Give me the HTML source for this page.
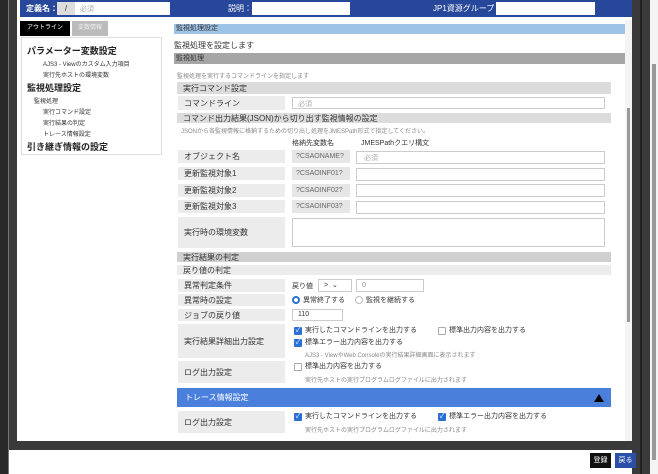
<!DOCTYPE html><html><head><meta charset="utf-8"><style>
*{margin:0;padding:0;box-sizing:border-box}
body{width:658px;height:474px;position:relative;overflow:hidden;background:#3a3a3a;font-family:"Liberation Sans","Noto Sans CJK JP",sans-serif;font-size:8px;color:#333}
div,span{position:absolute}
.t{white-space:nowrap}
.lbl{background:#ececec;left:178px;width:107px;padding-left:6px;display:flex;align-items:center;font-size:8px;color:#333}
.inp{background:#fff;border:1px solid #ccc}
.bar{background:#dcdcdc;left:177px;width:434px;padding-left:6px;font-size:8px;display:flex;align-items:center}
.ro{background:#e6e6e6;left:292px;width:58px;height:13px;font-size:7px;color:#666;padding-left:4px;display:flex;align-items:center}
.q{left:356px;width:249px;height:13px}
.cb{width:8px;height:8px;background:#2a6fd6;border-radius:1px;color:#fff;font-size:7px;line-height:8px;text-align:center}
.cbo{width:8px;height:8px;border:1px solid #aaa;background:#fff;border-radius:1px}
.s{font-size:6px;color:#888}
</style></head><body>
<div style="left:0;top:0;width:8px;height:474px;background:#282828"></div>
<div style="left:8px;top:0;width:1px;height:474px;background:#777"></div>
<div style="left:17px;top:0;width:615px;height:441px;background:#fff"></div>
<div style="left:20px;top:0;width:612px;height:17px;background:#27479a"></div>
<div class="t" style="left:26px;top:3px;color:#fff;font-size:8px;font-weight:bold">定義名：</div>
<div class="inp" style="left:57px;top:2px;width:113px;height:13px;border:none"></div>
<div style="left:57px;top:2px;width:18px;height:13px;background:#ddd;font-size:8px;text-align:center;line-height:13px">/</div>
<div class="t" style="left:80px;top:4px;color:#aaa;font-size:7px">必須</div>
<div class="t" style="left:228px;top:3px;color:#fff;font-size:8px">説明：</div>
<div style="left:252px;top:2px;width:98px;height:13px;background:#fff"></div>
<div class="t" style="left:433px;top:3px;color:#fff;font-size:8px">JP1資源グループ：</div>
<div style="left:496px;top:2px;width:99px;height:13px;background:#fff"></div>
<!-- left panel -->
<div style="left:20px;top:21px;width:50px;height:15px;background:#000;color:#fff;font-size:6px;line-height:15px;text-align:center">アウトライン</div>
<div style="left:72px;top:21px;width:36px;height:15px;background:#bbb;color:#eee;font-size:6px;line-height:15px;text-align:center">変数情報</div>
<div style="left:21px;top:37px;width:141px;height:118px;border:1px solid #ddd"></div>
<div class="t" style="left:27px;top:44px;font-size:9px;font-weight:bold;color:#222">パラメーター変数設定</div>
<div class="t" style="left:43px;top:59px;font-size:6px">AJS3 - Viewのカスタム入力項目</div>
<div class="t" style="left:43px;top:70px;font-size:6px">実行先ホストの環境変数</div>
<div class="t" style="left:27px;top:81px;font-size:9px;font-weight:bold;color:#222">監視処理設定</div>
<div class="t" style="left:34px;top:96px;font-size:6px">監視処理</div>
<div class="t" style="left:43px;top:107px;font-size:6px">実行コマンド設定</div>
<div class="t" style="left:43px;top:118px;font-size:6px">実行結果の判定</div>
<div class="t" style="left:43px;top:129px;font-size:6px">トレース情報設定</div>
<div class="t" style="left:27px;top:140px;font-size:9px;font-weight:bold;color:#222">引き継ぎ情報の設定</div>
<!-- main -->
<div style="left:174px;top:24px;width:451px;height:10px;background:#9dc3e6;padding-left:2px;font-size:7px;line-height:10px">監視処理設定</div>
<div class="t" style="left:174px;top:40px;font-size:8px">監視処理を設定します</div>
<div style="left:174px;top:53px;width:451px;height:11px;background:#a6a6a6;padding-left:2px;font-size:7px;line-height:11px">監視処理</div>
<div class="t s" style="left:177px;top:71px;font-size:6px">監視処理を実行するコマンドラインを指定します</div>
<div class="bar" style="top:82px;height:12px">実行コマンド設定</div>
<div class="lbl" style="top:96px;height:14px">コマンドライン</div>
<div class="inp" style="left:292px;top:97px;width:313px;height:12px"></div>
<div class="t" style="left:298px;top:99px;font-size:7px;color:#aaa">必須</div>
<div class="bar" style="top:113px;height:10px">コマンド出力結果(JSON)から切り出す監視情報の設定</div>
<div class="t s" style="left:181px;top:126px;font-size:6px">JSONから各監視情報に格納するための切り出し処理をJMESPath形式で指定してください。</div>
<div class="t" style="left:292px;top:138px;font-size:7px">格納先変数名</div>
<div class="t" style="left:361px;top:138px;font-size:7px">JMESPathクエリ構文</div>
<div class="lbl" style="top:150px;height:13px">オブジェクト名</div>
<div class="ro" style="top:150px">?CSAONAME?</div>
<div class="inp q" style="top:151px"></div><div class="t" style="left:364px;top:153px;font-size:7px;color:#aaa">必須</div>
<div class="lbl" style="top:167px;height:13px">更新監視対象1</div>
<div class="ro" style="top:167px">?CSAOINF01?</div><div class="inp q" style="top:168px"></div>
<div class="lbl" style="top:184px;height:13px">更新監視対象2</div>
<div class="ro" style="top:184px">?CSAOINF02?</div><div class="inp q" style="top:184px"></div>
<div class="lbl" style="top:200px;height:13px">更新監視対象3</div>
<div class="ro" style="top:200px">?CSAOINF03?</div><div class="inp q" style="top:201px"></div>
<div class="lbl" style="top:217px;height:31px">実行時の環境変数</div>
<div class="inp" style="left:292px;top:218px;width:313px;height:29px"></div>
<div class="bar" style="top:252px;height:10px;background:#d0d0d0">実行結果の判定</div>
<div class="bar" style="top:265px;height:10px;background:#ececec">戻り値の判定</div>
<div class="lbl" style="top:279px;height:13px">異常判定条件</div>
<div class="t" style="left:292px;top:281px;font-size:7px">戻り値</div>
<div class="inp" style="left:318px;top:279px;width:34px;height:13px;font-size:7px;padding-left:5px;line-height:11px">&gt; &nbsp;⌄</div>
<div class="inp" style="left:356px;top:279px;width:68px;height:13px;font-size:7px;padding-left:5px;line-height:11px;color:#888">0</div>
<div class="lbl" style="top:294px;height:12px">異常時の設定</div>
<div style="left:292px;top:296px;width:8px;height:8px;border-radius:50%;border:2.5px solid #2a6fd6;background:#fff"></div>
<div class="t" style="left:303px;top:295px;font-size:7px">異常終了する</div>
<div style="left:355px;top:296px;width:8px;height:8px;border-radius:50%;border:1px solid #bbb"></div>
<div class="t" style="left:366px;top:295px;font-size:7px">監視を継続する</div>
<div class="lbl" style="top:309px;height:12px">ジョブの戻り値</div>
<div class="inp" style="left:292px;top:309px;width:51px;height:12px;font-size:7px;padding-left:5px;line-height:10px">110</div>
<div class="lbl" style="top:324px;height:34px">実行結果詳細出力設定</div>
<div class="cb" style="left:294px;top:327px">✓</div><div class="t" style="left:305px;top:325px;font-size:7px">実行したコマンドラインを出力する</div>
<div class="cbo" style="left:438px;top:327px"></div><div class="t" style="left:449px;top:325px;font-size:7px">標準出力内容を出力する</div>
<div class="cb" style="left:294px;top:339px">✓</div><div class="t" style="left:305px;top:337px;font-size:7px">標準エラー出力内容を出力する</div>
<div class="t s" style="left:305px;top:350px">AJS3 - ViewやWeb Consoleの実行結果詳細画面に表示されます</div>
<div class="lbl" style="top:361px;height:22px">ログ出力設定</div>
<div class="cbo" style="left:294px;top:363px"></div><div class="t" style="left:305px;top:361px;font-size:7px">標準出力内容を出力する</div>
<div class="t s" style="left:305px;top:375px">実行先ホストの実行プログラムログファイルに出力されます</div>
<div style="left:177px;top:388px;width:434px;height:19px;background:#4a7fdc;color:#fff;font-size:8px;line-height:19px;padding-left:8px">トレース情報設定</div>
<div style="left:594px;top:394px;width:0;height:0;border-left:5px solid transparent;border-right:5px solid transparent;border-bottom:8px solid #000"></div>
<div class="lbl" style="top:411px;height:22px">ログ出力設定</div>
<div class="cb" style="left:294px;top:413px">✓</div><div class="t" style="left:305px;top:411px;font-size:7px">実行したコマンドラインを出力する</div>
<div class="cb" style="left:438px;top:413px">✓</div><div class="t" style="left:449px;top:411px;font-size:7px">標準エラー出力内容を出力する</div>
<div class="t s" style="left:305px;top:425px">実行先ホストの実行プログラムログファイルに出力されます</div>
<!-- inner scrollbar -->
<div style="left:625px;top:20px;width:7px;height:421px;background:#f4f4f4"></div>
<div style="left:627px;top:108px;width:3px;height:214px;background:#999"></div>
<!-- right dark columns -->
<div style="left:632px;top:0;width:18px;height:474px;background:#3a3a3a"></div>
<div style="left:640px;top:0;width:2px;height:474px;background:#222"></div>
<div style="left:650px;top:0;width:8px;height:474px;background:#f4f4f4"></div>
<div style="left:652px;top:64px;width:4px;height:396px;background:#999"></div>
<!-- bottom bar -->
<div style="left:9px;top:450px;width:623px;height:24px;background:#fff"></div>
<div style="left:590px;top:453px;width:21px;height:15px;background:#111;color:#fff;font-size:7px;line-height:15px;text-align:center">登録</div>
<div style="left:615px;top:453px;width:21px;height:15px;background:#2a4fa8;color:#fff;font-size:7px;line-height:15px;text-align:center">戻る</div>
</body></html>
